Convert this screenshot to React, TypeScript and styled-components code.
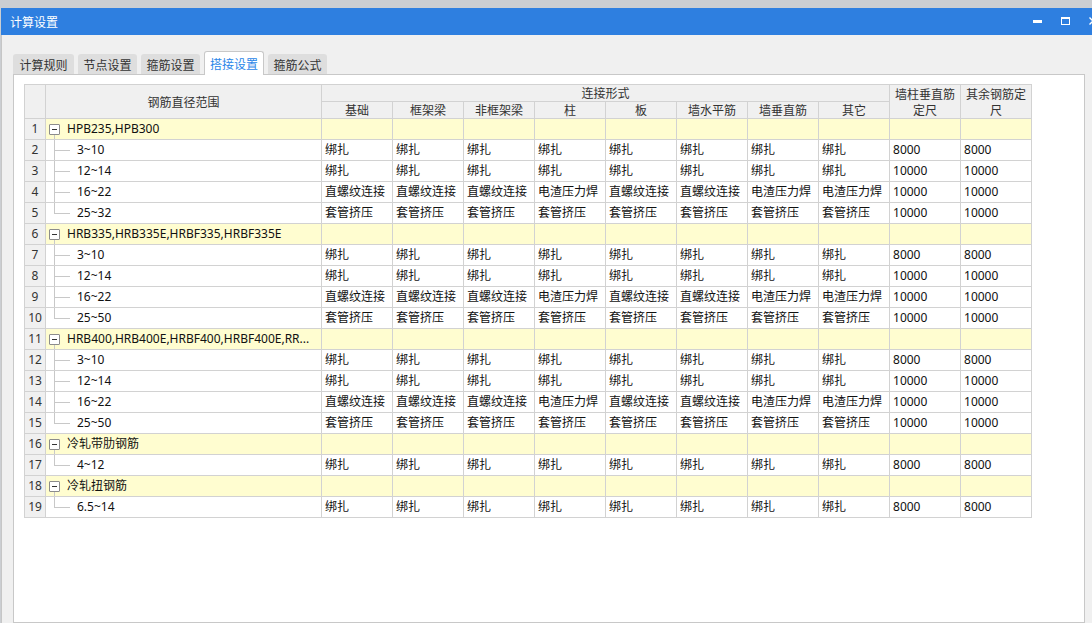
import styled, { createGlobalStyle } from 'styled-components'

const GlobalStyle = createGlobalStyle`
  html, body {
    margin: 0;
    padding: 0;
  }
  body {
    background: #cbced2;
    font-family: "Noto Sans", "Noto Sans CJK SC", sans-serif;
    font-size: 12px;
    overflow: hidden;
  }
`

const Screen = styled.div`
  width: 1092px;
  height: 623px;
  overflow: hidden;
  padding: 8px 0 0 1px;
  box-sizing: border-box;
`

const Window = styled.div`
  width: 1106px;
  height: 615px;
  display: flex;
  flex-direction: column;
`

const TitleBar = styled.div`
  height: 27px;
  flex-shrink: 0;
  background: #2e7fe0;
  color: #fff;
  display: flex;
  align-items: center;
  padding-left: 9px;
  font-size: 12px;
`

const Title = styled.span`
  flex: 1;
  font-family: "Noto Sans CJK SC", sans-serif;
`

const WinButton = styled.div`
  width: 28px;
  height: 27px;
  display: flex;
  align-items: center;
  justify-content: center;
`

const Body = styled.div`
  flex: 1;
  background: #f0f0f0;
  border-left: 1px solid #c6c6c6;
  display: flex;
  flex-direction: column;
  min-height: 0;
`

const TabRow = styled.div`
  display: flex;
  align-items: flex-end;
  gap: 4px;
  height: 23px;
  margin: 16px 0 0 11px;
  flex-shrink: 0;
`

const Tab = styled.div<{ $active?: boolean }>`
  height: ${({ $active }) => ($active ? '24px' : '20px')};
  margin-bottom: ${({ $active }) => ($active ? '-1px' : '0')};
  padding: 0 ${({ $active }) => ($active ? '5px' : '5.5px')};
  box-sizing: border-box;
  display: flex;
  align-items: center;
  justify-content: center;
  border-radius: 3px 3px 0 0;
  background: ${({ $active }) => ($active ? '#fff' : '#dedede')};
  border: ${({ $active }) => ($active ? '1px solid #c8c8c8' : 'none')};
  border-bottom: none;
  color: ${({ $active }) => ($active ? '#2a86e8' : '#333')};
  font-family: "Noto Sans CJK SC", sans-serif;
  font-size: 12px;
  position: relative;
  z-index: ${({ $active }) => ($active ? 1 : 0)};

  &:first-child {
    padding: 0 6.5px;
  }
`

const Panel = styled.div`
  width: 1072px;
  margin-left: 11px;
  flex: 1;
  background: #fff;
  border: 1px solid #c8c8c8;
  box-sizing: border-box;
  padding: 9px 0 0 10px;
`

const Grid = styled.table`
  border-collapse: separate;
  border-spacing: 0;
  table-layout: fixed;
  width: 1008px;
  border-top: 1px solid #d2d2d2;
  border-left: 1px solid #d2d2d2;
  font-size: 12px;
  line-height: 16px;
`

const HeadRow = styled.tr`
  height: 17px;
`

const Row = styled.tr`
  height: 21px;
`

const Th = styled.th`
  background: #f0f0f0;
  color: #333;
  font-weight: normal;
  text-align: center;
  padding: 0;
  height: 16px;
  border-right: 1px solid #d2d2d2;
  border-bottom: 1px solid #d2d2d2;
  font-family: "Noto Sans CJK SC", sans-serif;
  line-height: 16px;
`

const NumCell = styled.td`
  background: #f0f0f0;
  color: #333;
  text-align: center;
  padding: 0;
  border-right: 1px solid #d2d2d2;
  border-bottom: 1px solid #d2d2d2;
`

const Cell = styled.td<{ $group?: boolean }>`
  background: ${({ $group }) => ($group ? '#fffdd0' : '#fff')};
  color: #111;
  padding: 0 0 0 3px;
  white-space: nowrap;
  overflow: hidden;
  border-right: 1px solid #d2d2d2;
  border-bottom: 1px solid #d2d2d2;
`

const TreeLine = styled.div`
  display: flex;
  align-items: center;
  height: 20px;
`

const Toggle = styled.span`
  width: 11px;
  height: 20px;
  display: flex;
  align-items: center;
  flex-shrink: 0;
  background: linear-gradient(#c8c8c8, #c8c8c8) 5px 100% / 1px 50% no-repeat;
`

const MinusBox = styled.span`
  width: 11px;
  height: 11px;
  box-sizing: border-box;
  border: 1px solid #8c8c8c;
  border-radius: 1px;
  background: #fff;
  display: flex;
  align-items: center;
  justify-content: center;

  &::before {
    content: '';
    width: 5px;
    height: 1px;
    background: #333;
  }
`

const Connector = styled.span<{ $last?: boolean }>`
  width: 16px;
  height: 20px;
  margin-left: 5px;
  flex-shrink: 0;
  background:
    linear-gradient(#c8c8c8, #c8c8c8) 0 0 / 1px ${({ $last }) => ($last ? '50%' : '100%')} no-repeat,
    linear-gradient(#c8c8c8, #c8c8c8) 0 50% / 16px 1px no-repeat;
`

const GroupName = styled.span`
  margin-left: 7px;
`

const ChildName = styled.span`
  margin-left: 7px;
`

const BIND = Array(8).fill('绑扎')
const SCREW = ['直螺纹连接', '直螺纹连接', '直螺纹连接', '电渣压力焊', '直螺纹连接', '直螺纹连接', '电渣压力焊', '电渣压力焊']
const SLEEVE = Array(8).fill('套管挤压')

type Child = { range: string; cells: string[]; a: string; b: string }
type Group = { name: string; children: Child[] }

const standard = (last: string): Child[] => [
  { range: '3~10', cells: BIND, a: '8000', b: '8000' },
  { range: '12~14', cells: BIND, a: '10000', b: '10000' },
  { range: '16~22', cells: SCREW, a: '10000', b: '10000' },
  { range: last, cells: SLEEVE, a: '10000', b: '10000' },
]

const groups: Group[] = [
  { name: 'HPB235,HPB300', children: standard('25~32') },
  { name: 'HRB335,HRB335E,HRBF335,HRBF335E', children: standard('25~50') },
  { name: 'HRB400,HRB400E,HRBF400,HRBF400E,RR...', children: standard('25~50') },
  { name: '冷轧带肋钢筋', children: [{ range: '4~12', cells: BIND, a: '8000', b: '8000' }] },
  { name: '冷轧扭钢筋', children: [{ range: '6.5~14', cells: BIND, a: '8000', b: '8000' }] },
]

const subHeads = ['基础', '框架梁', '非框架梁', '柱', '板', '墙水平筋', '墙垂直筋', '其它']
const tabs = ['计算规则', '节点设置', '箍筋设置', '搭接设置', '箍筋公式']

export default function App() {
  let n = 0
  const rows: JSX.Element[] = []
  groups.forEach((g) => {
    n += 1
    rows.push(
      <Row key={`g${n}`}>
        <NumCell>{n}</NumCell>
        <Cell $group>
          <TreeLine>
            <Toggle>
              <MinusBox />
            </Toggle>
            <GroupName>{g.name}</GroupName>
          </TreeLine>
        </Cell>
        {Array.from({ length: 10 }).map((_, i) => (
          <Cell $group key={i} />
        ))}
      </Row>
    )
    g.children.forEach((c, ci) => {
      n += 1
      rows.push(
        <Row key={`c${n}`}>
          <NumCell>{n}</NumCell>
          <Cell>
            <TreeLine>
              <Connector $last={ci === g.children.length - 1} />
              <ChildName>{c.range}</ChildName>
            </TreeLine>
          </Cell>
          {c.cells.map((t, i) => (
            <Cell key={i}>{t}</Cell>
          ))}
          <Cell>{c.a}</Cell>
          <Cell>{c.b}</Cell>
        </Row>
      )
    })
  })

  return (
    <Screen>
      <GlobalStyle />
      <Window>
        <TitleBar>
          <Title>计算设置</Title>
          <WinButton>
            <svg width="9" height="3" viewBox="0 0 9 3">
              <rect x="0" y="0" width="9" height="3" fill="#fff" />
            </svg>
          </WinButton>
          <WinButton>
            <svg width="9" height="8" viewBox="0 0 9 8" style={{ marginTop: -2 }}>
              <rect x="0.5" y="1" width="8" height="6.5" fill="none" stroke="#fff" strokeWidth="1" />
              <rect x="0" y="0" width="9" height="2" fill="#fff" />
            </svg>
          </WinButton>
          <WinButton>
            <svg width="8" height="8" viewBox="0 0 8 8" style={{ marginTop: -2 }}>
              <path d="M0.5 0.5 L7.5 7.5 M7.5 0.5 L0.5 7.5" stroke="#fff" strokeWidth="1.4" />
            </svg>
          </WinButton>
        </TitleBar>
        <Body>
          <TabRow>
            {tabs.map((t) => (
              <Tab key={t} $active={t === '搭接设置'}>
                {t}
              </Tab>
            ))}
          </TabRow>
          <Panel>
            <Grid>
              <colgroup>
                <col style={{ width: 21 }} />
                <col style={{ width: 276 }} />
                {Array.from({ length: 10 }).map((_, i) => (
                  <col key={i} style={{ width: 71 }} />
                ))}
              </colgroup>
              <thead>
                <HeadRow>
                  <Th rowSpan={2} />
                  <Th rowSpan={2}>钢筋直径范围</Th>
                  <Th colSpan={8}>连接形式</Th>
                  <Th rowSpan={2}>墙柱垂直筋定尺</Th>
                  <Th rowSpan={2}>其余钢筋定尺</Th>
                </HeadRow>
                <HeadRow>
                  {subHeads.map((h) => (
                    <Th key={h}>{h}</Th>
                  ))}
                </HeadRow>
              </thead>
              <tbody>{rows}</tbody>
            </Grid>
          </Panel>
        </Body>
      </Window>
    </Screen>
  )
}
